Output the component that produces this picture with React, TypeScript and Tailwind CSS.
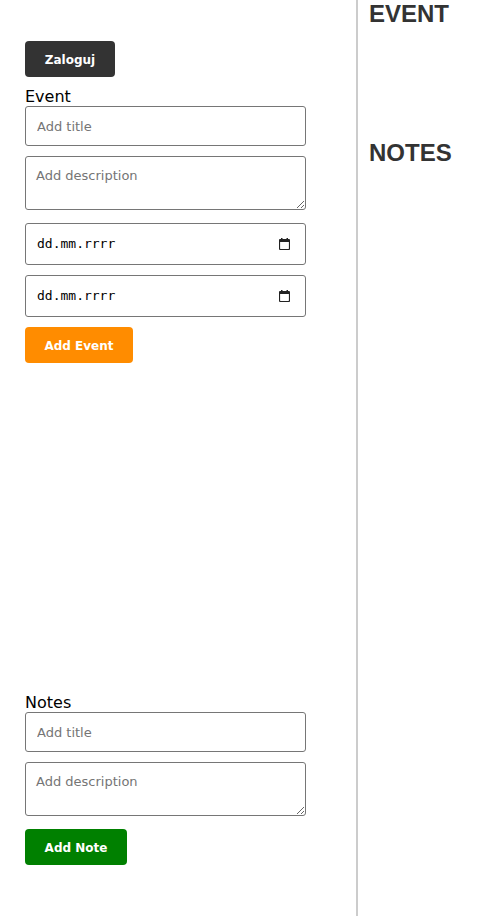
import React from "react";

function Calendar() {
  return (
    <svg width="11" height="12" viewBox="0 0 11 12" className="shrink-0">
      <rect x="2" y="0" width="1.5" height="2" fill="#222" />
      <rect x="7.5" y="0" width="1.5" height="2" fill="#222" />
      <rect x="0.5" y="1.5" width="10" height="10" rx="1" fill="none" stroke="#222" strokeWidth="1.2" />
      <rect x="0.5" y="1.5" width="10" height="2.5" fill="#222" />
    </svg>
  );
}

function DateBox({ className }: { className: string }) {
  return (
    <div
      className={`flex h-[42px] w-[281px] items-center justify-between rounded-[3px] border border-[#767676] bg-white pl-[11px] pr-[15px] text-[13px] text-black ${className}`}
      style={{ fontFamily: '"DejaVu Sans Mono", monospace' }}
    >
      <span>dd.mm.rrrr</span>
      <Calendar />
    </div>
  );
}

export default function App() {
  const inputCls =
    "block h-[40px] w-[281px] rounded-[3px] border border-[#767676] bg-white px-[11px] text-[13px] text-black outline-none placeholder:text-[#757575]";
  const areaCls =
    "block h-[54px] w-[281px] rounded-[3px] border border-[#767676] bg-white px-[10px] pt-[11px] pb-[9px] text-[13px] leading-[15px] text-black outline-none placeholder:text-[#757575]";
  return (
    <div className="flex min-h-screen bg-white" style={{ fontFamily: '"DejaVu Sans", sans-serif' }}>
      <div className="w-[358px] shrink-0 border-r-2 border-[#ccc] pl-[25px] pt-[41px]">
        <button className="flex h-[36px] w-[90px] items-center justify-center rounded-[4px] bg-[#333] pt-[2px] text-[12px] font-bold text-white">
          Zaloguj
        </button>
        <div className="mt-[11px]">
          <div className="text-[16px] leading-[18px] text-black">Event</div>
          <input className={inputCls} placeholder="Add title" />
          <textarea className={`${areaCls} mt-[10px]`} placeholder="Add description" />
          <DateBox className="mt-[13px]" />
          <DateBox className="mt-[10px]" />
          <button className="mt-[10px] flex h-[36px] w-[108px] items-center justify-center rounded-[4px] bg-[#ff8c00] pt-[2px] text-[12px] font-bold text-white">
            Add Event
          </button>
        </div>
        <div className="mt-[331px]">
          <div className="text-[16px] leading-[18px] text-black">Notes</div>
          <input className={inputCls} placeholder="Add title" />
          <textarea className={`${areaCls} mt-[10px]`} placeholder="Add description" />
          <button className="mt-[13px] flex h-[36px] w-[102px] items-center justify-center rounded-[4px] bg-[#008000] pt-[2px] text-[12px] font-bold text-white">
            Add Note
          </button>
        </div>
      </div>
      <div className="flex-1 pl-[11px]" style={{ fontFamily: '"Liberation Sans", Arial, sans-serif' }}>
        <h2 className="h-[139px] text-[24px] font-bold leading-[28px] text-[#333]">EVENT</h2>
        <h2 className="text-[24px] font-bold leading-[28px] text-[#333]">NOTES</h2>
      </div>
    </div>
  );
}
